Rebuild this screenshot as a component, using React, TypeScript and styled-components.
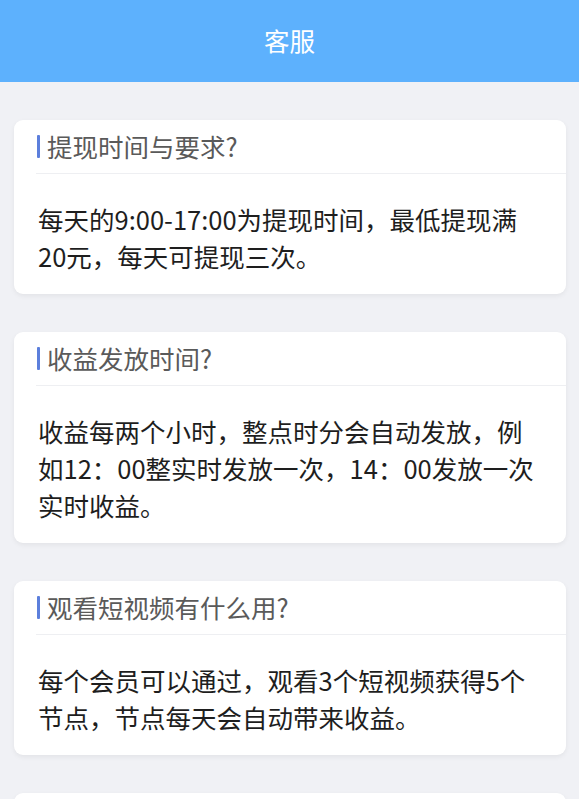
import styled, { createGlobalStyle } from 'styled-components';

const GlobalStyle = createGlobalStyle`
	html, body {
		margin: 0;
		padding: 0;
		background: #f0f1f5;
	}
	body {
		font-family: 'Noto Sans CJK SC', 'Noto Sans', sans-serif;
	}
`;

interface IFaq {
	question: string;
	answer: string;
}

const faqs: IFaq[] = [
	{
		question: '提现时间与要求?',
		answer: '每天的9:00-17:00为提现时间，最低提现满20元，每天可提现三次。',
	},
	{
		question: '收益发放时间?',
		answer: '收益每两个小时，整点时分会自动发放，例如12：00整实时发放一次，14：00发放一次实时收益。',
	},
	{
		question: '观看短视频有什么用?',
		answer: '每个会员可以通过，观看3个短视频获得5个节点，节点每天会自动带来收益。',
	},
	{
		question: '如何邀请好友?',
		answer: '在我的页面点击邀请好友，分享邀请码即可。',
	},
];

const App = () => {
	return (
		<>
			<GlobalStyle />
			<Page>
				<Header>
					<HeaderTitle>客服</HeaderTitle>
				</Header>
				<List>
					{faqs.map(item => (
						<Card key={item.question}>
							<CardHead>
								<Bar />
								<Question>{item.question}</Question>
							</CardHead>
							<Answer>{item.answer}</Answer>
						</Card>
					))}
				</List>
			</Page>
		</>
	);
};

const Page = styled.div`
	min-height: 100vh;
	background: #f0f1f5;
`;

const Header = styled.div`
	height: 82px;
	background: #5db1fd;
	display: flex;
	align-items: center;
	justify-content: center;
`;

const HeaderTitle = styled.div`
	color: #ffffff;
	font-size: 25.5px;
	line-height: 1;
	margin-top: -2px;
`;

const List = styled.div`
	display: flex;
	flex-direction: column;
	gap: 38px;
	padding: 38px 13px 0 14px;
`;

const Card = styled.div`
	background: #ffffff;
	border-radius: 9px;
	box-shadow: 0 2px 5px rgba(0, 0, 0, 0.06);
`;

const CardHead = styled.div`
	height: 53px;
	margin-left: 22px;
	display: flex;
	align-items: center;
	gap: 7px;
	border-bottom: 1px solid #eeeff2;
`;

const Bar = styled.span`
	width: 3px;
	height: 23px;
	margin-left: 1px;
	border-radius: 1px;
	background: #5c7fdc;
`;

const Question = styled.div`
	color: #5a5a5a;
	font-size: 25.5px;
	line-height: 1;
	margin-top: -1px;
`;

const Answer = styled.div`
	padding: 26px 25px 20px 24px;
	color: #1e1e1e;
	font-size: 25.5px;
	line-height: 37px;
`;

export default App;
